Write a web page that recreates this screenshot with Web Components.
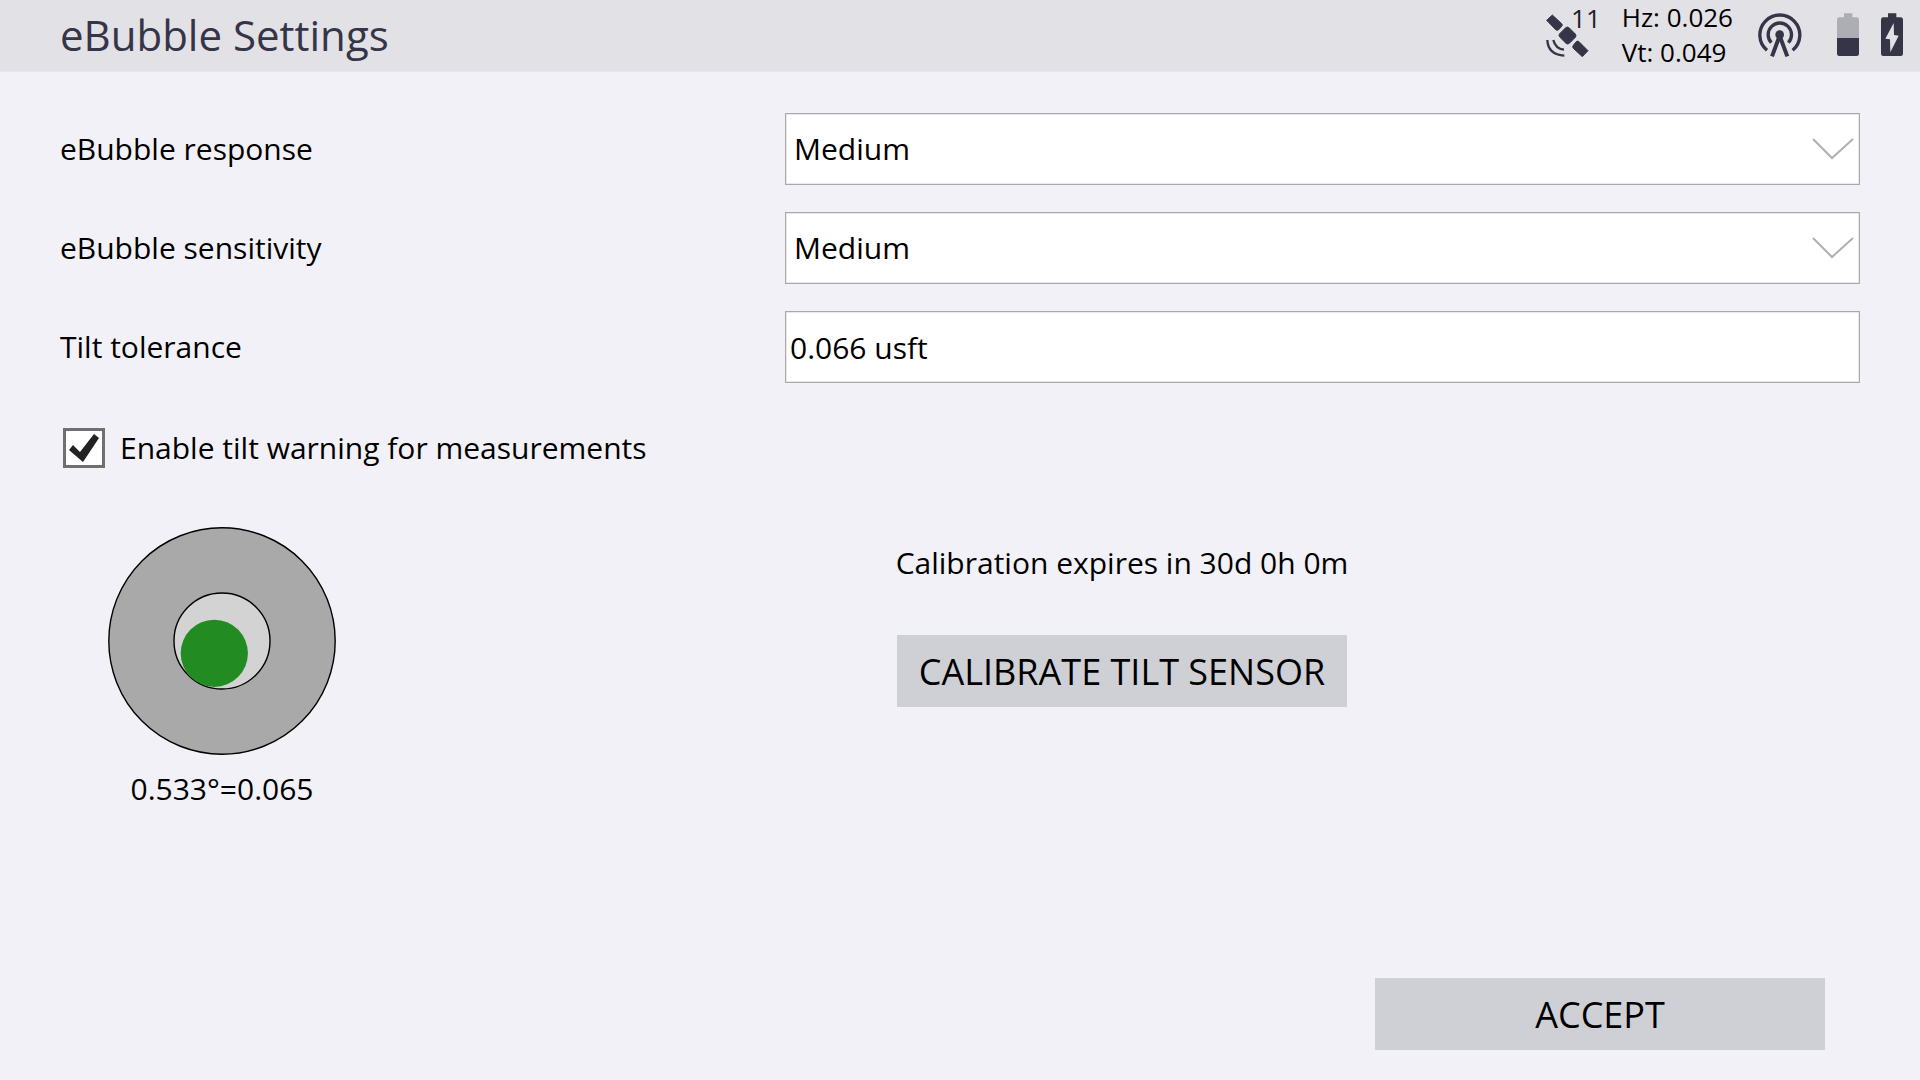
<!DOCTYPE html>
<html lang="en">
<head>
<meta charset="utf-8">
<meta name="viewport" content="width=device-width, initial-scale=1">
<title>eBubble Settings</title>
<style>
    body {
        margin: 0;
        background-color: #f2f1f7;
        color: #000;
        font-family: "Open Sans", "Noto Sans", sans-serif;
        font-size: 30px;
        line-height: 40px;
    }
</style>
</head>
<body>
<settings-page></settings-page>

<script>
class StatusIcon extends HTMLElement {

    constructor() {
        super();
        this.shadowDOM = this.attachShadow({mode: "open"});
    }

    connectedCallback() {
        this.render();
    }

    get shape() {
        const shapes = {
            satellite: `
                <g stroke="#353547" stroke-width="3" stroke-linejoin="round">
                    <path d="M22 6 L50 32 Q54 36 50 40 L41 50 Q37 54 32 50 L5 22 Z"/>
                    <path d="M62 44 Q67 40 72 44 L91 63 Q95 68 91 73 L73 91 Q68 95 63 91 L44 72 Q40 67 44 62 Z"/>
                    <path d="M102 86 L129 113 L112 131 L85 106 Q81 102 85 97 L93 87 Q98 82 102 86 Z"/>
                </g>
                <path class="line" stroke-width="7" d="M25 81 Q31 107 57 110 M7 81 Q9 125 58 128"/>`,
            antenna: `
                <path class="line" stroke-width="10" d="M27 112 A60 60 0 1 1 104 112 M40 89 A35 35 0 1 1 91 89"/>
                <circle cx="65" cy="65" r="13"/>
                <path class="line" stroke-width="12" d="M42 130 L65 68 L88 130"/>`,
            half: `
                <path fill="#adadb4" d="M54 1 H79 V13 H92 Q99 13 99 20 V76 H33 V20 Q33 13 40 13 H54 Z"/>
                <path d="M33 75 H99 V122 Q99 129 92 129 H40 Q33 129 33 122 Z"/>`,
            charging: `
                <path d="M54 1 H79 V13 H92 Q99 13 99 20 V122 Q99 129 92 129 H40 Q33 129 33 122 V20 Q33 13 40 13 H54 Z"/>
                <path fill="#e2e1e6" d="M71 30 L46 77 L60 79 L61 118 L86 68 L72 66 Z"/>`
        };
        return shapes[this.getAttribute("name")];
    }

    render() {
        this.shadowDOM.innerHTML = `
        <style>
        :host {
            display: block;
            flex: none;
        }

        svg {
            display: block;
            width: 44px;
            height: 44px;
            fill: #353547;
        }

        .line {
            fill: none;
            stroke: #353547;
        }
        </style>
        <svg viewBox="0 0 132 132" aria-hidden="true">${this.shape}</svg>`;
    }
}

class PageHeader extends HTMLElement {

    constructor() {
        super();
        this.shadowDOM = this.attachShadow({mode: "open"});
    }

    connectedCallback() {
        this.shadowDOM.innerHTML = `
        <style>
        :host {
            display: block;
        }

        header {
            display: flex;
            align-items: center;
            justify-content: space-between;
            padding: 0 6px 1px 60px;
            background-color: #e2e1e6;
            border-bottom: 1px solid #e8e7ec;
        }

        h1 {
            margin: 0;
            color: #353547;
            font-size: 42px;
            font-weight: 400;
            line-height: 56px;
        }

        .status {
            display: flex;
            align-items: center;
            font-size: 26px;
            line-height: 35px;
        }

        .satellites {
            position: relative;
            width: 56px;
            margin-right: 21px;
        }

        .count {
            position: absolute;
            top: -12px;
            right: 0;
            color: #1c1c2a;
        }

        .accuracy {
            margin-right: 25px;
        }

        .batteries {
            display: flex;
            margin-left: 24px;
        }
        </style>
        <header>
            <h1><slot></slot></h1>
            <div class="status">
                <div class="satellites">
                    <status-icon name="satellite"></status-icon>
                    <span class="count">${this.getAttribute("satellites")}</span>
                </div>
                <div class="accuracy">
                    <div>Hz: ${this.getAttribute("hz")}</div>
                    <div>Vt: ${this.getAttribute("vt")}</div>
                </div>
                <status-icon name="antenna"></status-icon>
                <div class="batteries">
                    <status-icon name="half"></status-icon>
                    <status-icon name="charging"></status-icon>
                </div>
            </div>
        </header>`;
    }
}

// One label + control row, either a drop-down (options="a,b") or a text box
class SettingField extends HTMLElement {

    constructor() {
        super();
        this.shadowDOM = this.attachShadow({mode: "open"});
    }

    connectedCallback() {
        this.render();
    }

    get control() {
        const value = this.getAttribute("value");
        if (!this.hasAttribute("options")) {
            return `<input id="control" type="text" value="${value}">`;
        }
        const options = this.getAttribute("options").split(",")
            .map(item => `<option${item === value ? " selected" : ""}>${item}</option>`)
            .join("");
        return `
            <select id="control">${options}</select>
            <svg viewBox="0 0 42 22" aria-hidden="true"><path d="M1 1 L20 20 L41 1"/></svg>`;
    }

    render() {
        this.shadowDOM.innerHTML = `
        <style>
        * {
            box-sizing: border-box;
        }

        :host {
            display: grid;
            grid-template-columns: 29fr 43fr;
            align-items: center;
        }

        .control {
            display: grid;
            align-items: center;
        }

        select, input {
            grid-area: 1 / 1;
            width: 100%;
            height: 72px;
            margin: 0;
            padding: 0 4px;
            border: 1px solid #a9a9ac;
            border-radius: 0;
            box-shadow: inset 0 0 0 1px #e9e9ea;
            background-color: #fff;
            color: #000;
            font: inherit;
            appearance: none;
        }

        select {
            padding: 0 56px 0 8px;
        }

        svg {
            grid-area: 1 / 1;
            justify-self: end;
            width: 42px;
            height: 22px;
            margin-right: 6px;
            fill: none;
            stroke: #b0b0b0;
            stroke-width: 2;
            pointer-events: none;
        }
        </style>
        <label for="control"><slot></slot></label>
        <div class="control">${this.control}</div>`;
    }
}

class SettingCheck extends HTMLElement {

    constructor() {
        super();
        this.shadowDOM = this.attachShadow({mode: "open"});
    }

    connectedCallback() {
        this.shadowDOM.innerHTML = `
        <style>
        :host {
            display: flex;
            align-items: center;
            gap: 15px;
            min-height: 76px;
            padding-left: 3px;
        }

        .box {
            display: grid;
        }

        input {
            grid-area: 1 / 1;
            box-sizing: border-box;
            width: 42px;
            height: 40px;
            margin: 0;
            border: 3px solid #707070;
            background-color: #fff;
            appearance: none;
        }

        svg {
            grid-area: 1 / 1;
            width: 42px;
            height: 40px;
            fill: #222;
            visibility: hidden;
            pointer-events: none;
        }

        input:checked + svg {
            visibility: visible;
        }
        </style>
        <span class="box">
            <input id="check" type="checkbox"${this.hasAttribute("checked") ? " checked" : ""}>
            <svg viewBox="0 0 42 40" aria-hidden="true"><path d="M10 17 L17 24 L31 6 L36 10 L20 34 L6 22 Z"/></svg>
        </span>
        <label for="check"><slot></slot></label>`;
    }
}

class BubbleLevel extends HTMLElement {

    constructor() {
        super();
        this.shadowDOM = this.attachShadow({mode: "open"});
    }

    connectedCallback() {
        this.shadowDOM.innerHTML = `
        <style>
        :host {
            display: flex;
            flex-direction: column;
            align-items: center;
            gap: 14px;
        }

        svg {
            display: block;
            width: 228px;
            height: 228px;
        }
        </style>
        <svg viewBox="0 0 228 228" role="img" aria-label="Tilt bubble">
            <circle cx="114" cy="114" r="113.2" fill="#a9a9a9" stroke="#000" stroke-width="1.4"/>
            <circle cx="114" cy="114" r="48" fill="#d3d3d3" stroke="#000" stroke-width="1.4"/>
            <circle cx="${this.getAttribute("x")}" cy="${this.getAttribute("y")}" r="33.6" fill="#228b22"/>
        </svg>
        <div><slot></slot></div>`;
    }
}

class ActionButton extends HTMLElement {

    constructor() {
        super();
        this.shadowDOM = this.attachShadow({mode: "open"});
    }

    connectedCallback() {
        this.shadowDOM.innerHTML = `
        <style>
        :host {
            display: block;
        }

        button {
            display: block;
            min-width: 450px;
            height: 72px;
            margin: 0;
            padding: 2px 20px 0;
            border: none;
            background-color: #cfd0d5;
            color: #000;
            font: inherit;
            font-size: 36px;
            text-transform: uppercase;
        }
        </style>
        <button type="button"><slot></slot></button>`;
    }
}

class SettingsPage extends HTMLElement {

    constructor() {
        super();
        this.shadowDOM = this.attachShadow({mode: "open"});
    }

    connectedCallback() {
        this.shadowDOM.innerHTML = `
        <style>
        :host {
            display: flex;
            flex-direction: column;
            min-height: 100vh;
        }

        main {
            flex: 1;
            padding: 41px 60px;
        }

        .fields {
            display: flex;
            flex-direction: column;
            gap: 27px;
        }

        .tilt {
            display: flex;
            align-items: flex-start;
            margin-top: 41px;
        }

        bubble-level {
            flex: none;
            width: 324px;
        }

        .calibration {
            flex: 1;
            display: flex;
            flex-direction: column;
            align-items: center;
            gap: 52px;
            padding-top: 16px;
        }

        footer {
            display: flex;
            justify-content: flex-end;
            padding: 0 95px 30px;
        }
        </style>
        <page-header satellites="11" hz="0.026" vt="0.049">eBubble Settings</page-header>
        <main>
            <div class="fields">
                <setting-field options="Low,Medium,High" value="Medium">eBubble response</setting-field>
                <setting-field options="Low,Medium,High" value="Medium">eBubble sensitivity</setting-field>
                <setting-field value="0.066 usft">Tilt tolerance</setting-field>
                <setting-check checked>Enable tilt warning for measurements</setting-check>
            </div>
            <div class="tilt">
                <bubble-level x="106.3" y="126.3">0.533°=0.065</bubble-level>
                <div class="calibration">
                    <div>Calibration expires in 30d 0h 0m</div>
                    <action-button>Calibrate tilt sensor</action-button>
                </div>
            </div>
        </main>
        <footer>
            <action-button>Accept</action-button>
        </footer>`;
    }
}

customElements.define("status-icon", StatusIcon);
customElements.define("page-header", PageHeader);
customElements.define("setting-field", SettingField);
customElements.define("setting-check", SettingCheck);
customElements.define("bubble-level", BubbleLevel);
customElements.define("action-button", ActionButton);
customElements.define("settings-page", SettingsPage);
</script>
</body>
</html>
